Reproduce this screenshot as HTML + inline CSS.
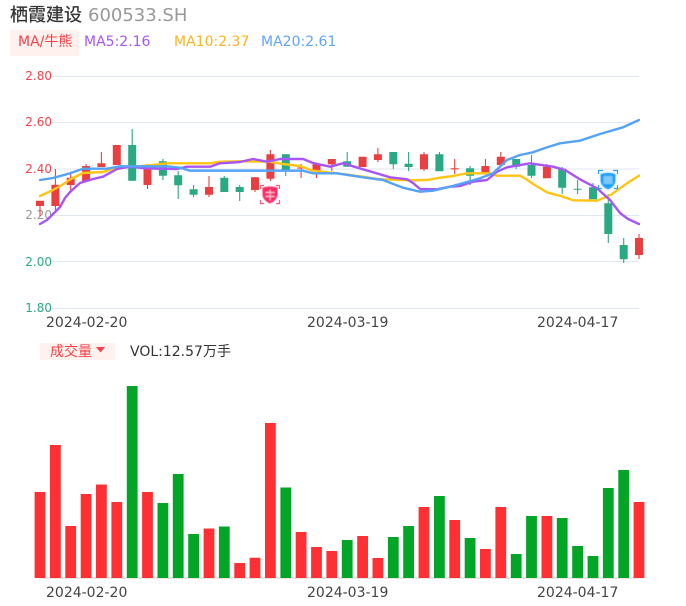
<!DOCTYPE html>
<html><head><meta charset="utf-8"><style>
html,body{margin:0;padding:0;background:#fff;width:686px;height:606px;overflow:hidden}
svg{display:block}
text{font-family:"DejaVu Sans","Noto Sans CJK SC","WenQuanYi Zen Hei",sans-serif}
.y{font-size:12px;text-anchor:end}
.d{font-size:14px;fill:#444}
</style></head><body>
<svg width="686" height="606" viewBox="0 0 686 606" xmlns="http://www.w3.org/2000/svg">
<defs><filter id="g" x="-30%" y="-30%" width="160%" height="160%"><feGaussianBlur stdDeviation=".5"/></filter></defs>
<text x="10" y="21" font-size="18" fill="#333" stroke="#333" stroke-width=".25">栖霞建设</text>
<text x="88" y="21" font-size="18" fill="#999">600533.SH</text>
<rect x="10" y="30" width="69" height="26" fill="#fff2ee"/>
<text x="18" y="46" font-size="14" fill="#f9404a">MA/牛熊</text>
<text x="84" y="46" font-size="14" fill="#a855f7">MA5:2.16</text>
<text x="174" y="46" font-size="14" fill="#fbb320">MA10:2.37</text>
<text x="261" y="46" font-size="14" fill="#60a5fa">MA20:2.61</text>

<path d="M52 76.5H639M52 122.5H639M52 169H639M52 215.5H639M52 261.5H639M52 308.5H639" stroke="#e1e6f3" stroke-width="1" fill="none"/>
<text class="y" x="52" y="80" fill="#f9404a">2.80</text>
<text class="y" x="52" y="126" fill="#f9404a">2.60</text>
<text class="y" x="52" y="173" fill="#f9404a">2.40</text>
<text class="y" x="52" y="219" fill="#999">2.20</text>
<text class="y" x="52" y="266" fill="#2aa984">2.00</text>
<text class="y" x="52" y="312" fill="#2aa984">1.80</text>
<text class="d" x="46" y="327">2024-02-20</text>
<text class="d" x="307" y="327">2024-03-19</text>
<text class="d" x="537" y="327">2024-04-17</text>

<g fill="none" stroke-width="1.1" stroke="#ea3f41">
<path d="M40 206V216M55.4 169V210M70.7 174V193M86.1 164V182M101.4 152V167M147.5 164V189M209 176V197M255 177V192M270.4 150V181M301.1 164V178M316.5 164V178M331.8 159V171M377.9 148V162M424 152V171M454.7 159V174M485.4 159V173M500.8 152V165M546.9 164V178M639 234V259"/>
</g>
<g fill="none" stroke-width="1.1" stroke="#2aa984">
<path d="M132.2 129V181M162.9 159V180M178.2 171V199M193.6 185V197M224.3 176V192M239.7 185V201M285.8 154V176M347.2 152V167M393.3 152V169M408.6 152V171M439.4 152V171M470.1 166V185M516.2 159V169M531.5 155V178M562.2 167V194M577.6 180V194M593 183V199M608.3 194V243M623.7 238V263"/>
</g>
<g fill="none" stroke-width="8" stroke="#ea3f41">
<path d="M40 200.7V206M55.4 184.7V206M70.7 177.7V185M86.1 166V181.3M101.4 163.3V167M116.8 145V165M147.5 167V185M209 187V194.7M255 177.3V190M270.4 154.3V178.7M316.5 164.3V171.7M331.8 159V164.3M362.6 156.7V167M377.9 154.3V160M424 154.3V169.3M485.4 166V173.3M500.8 156.7V165M546.9 166.7V178.3M639 238V255M301.1 167.5V168.5M454.7 168.2V169.4"/>
</g>
<g fill="none" stroke-width="8" stroke="#2aa984">
<path d="M132.2 145V180.7M162.9 161.3V175.7M178.2 175.3V185.3M193.6 189.3V194.7M224.3 177.7V192M239.7 187V192M285.8 154.3V170.7M347.2 161.3V166.7M393.3 152V164.3M408.6 163.7V167M439.4 154.3V171.3M470.1 168.3V175.7M516.2 159V166.7M531.5 165V175.7M562.2 168.7V187.7M577.6 188.8V189.8M593 187.3V199.3M608.3 203.3V234M623.7 245V259.3"/>
</g>

<g fill="none" stroke-width="2.4" stroke-linejoin="round" stroke-linecap="round">
<polyline stroke="#ffc414" points="40,196 53,190 62,185 70,179.5 83,173 103,172 120,166.7 133,166.7 153,165 167,163.3 210,163.3 220,161.7 240,161.3 270,161.7 283,164 300,166 313,170.7 337,173.3 363,176.7 380,179.3 410,180.3 427,180 440,177.7 453,176 467,173.3 490,173.3 497,175.7 520,175.700 526,179 533,184 547,192.3 563,196.700 573,200.300 597,200.700 610,195.300 627,183.300 639,175.700"/>
<polyline stroke="#a855f7" points="40,224 47,220 53,214 60,207 65,198 70,192 80,183 93,179 103,176.700 117,169 130,166.700 143,168 157,168.700 177,169 187,166.700 210,166.700 220,163.300 240,162 253,159 267,161.700 280,159 303,159 313,163 330,166.700 343,163.300 363,169.300 390,177.300 407,179.300 413,183 420,189 437,189.300 450,186.700 460,186 473,181.700 487,180 497,171.700 507,167.300 530,163.300 553,166.700 565,170 580,179.300 597,188.300 610,200 620,213 628,219 639,224"/>
<polyline stroke="#54a3f5" points="40,180 53,178 70,173.300 83,168.700 107,168.700 120,166.300 167,166.300 180,167.700 190,170.700 303,170.700 313,173.300 337,173.300 363,177.300 383,180 403,187.700 420,191.700 433,190.700 450,186.700 460,184 480,178.300 493,173.300 507,160 520,155 533,152.300 545,148 560,143.300 580,140.700 600,134 623,127.300 639,120"/>
</g>

<g>
<g filter="url(#g)">
<path d="M262.5 187.5Q270 185.500 277.500 187.500V195Q277 200.500 270 203.500Q263 200.500 262.500 195Z" fill="#fc2a66"/>
<path d="M265.500 192.500H274.500M265.500 196.500H274.500M270 189.500V200.500" stroke="#ffc4d4" stroke-width="1.300" fill="none"/>
</g>
<path d="M260.500 189V185.500H264M276 185.500H279.500V189M260.500 200V203.500H264M276 203.500H279.500V200" stroke="#fb5a82" stroke-width="1.200" fill="none"/>
<g filter="url(#g)">
<path d="M600.500 174Q608 171.500 615.500 174V181Q615 186.500 608 189.500Q601 186.500 600.500 181Z" fill="#1aa0fb"/>
<rect x="603.500" y="176" width="9" height="8" fill="#7cc8fb"/>
</g>
<path d="M598.500 174V170.500H603M613 170.500H617.500V174M598.500 185V188.500H602M614 188.500H617.500V185" stroke="#2aa6f7" stroke-width="1.200" fill="none"/>
</g>

<rect x="40" y="343" width="75" height="17" fill="#fff2ee"/>
<text x="50" y="356" font-size="14" fill="#f9404a">成交量</text>
<path d="M96 347H105L100.500 352.500Z" fill="#f9404a"/>
<text x="130" y="356" font-size="14" fill="#333">VOL:12.57万手</text>

<path d="M40 578H639" stroke="#ddd" stroke-width="1.500" fill="none"/>
<g fill="none" stroke-width="10.800" stroke="#ff3034">
<path d="M40 492V578M55.400 445V578M70.700 526V578M86.100 494V578M101.400 484.500V578M116.800 502V578M147.500 492V578M209 528.500V578M239.700 563V578M255 557.700V578M270.400 423V578M301.100 532V578M316.500 547V578M331.800 551V578M362.600 536V578M377.900 558V578M424 507V578M454.700 520V578M485.400 549V578M500.800 507V578M546.900 516V578M639 502V578"/>
</g>
<g fill="none" stroke-width="10.800" stroke="#02a525">
<path d="M132.200 386V578M162.900 503V578M178.200 474V578M193.600 534V578M224.300 526.500V578M285.800 487.500V578M347.200 540V578M393.300 537V578M408.600 526V578M439.400 496V578M470.100 538V578M516.200 554V578M531.500 516V578M562.200 518V578M577.600 546V578M593 556V578M608.300 488V578M623.700 470V578"/>
</g>
<text class="d" x="46" y="597">2024-02-20</text>
<text class="d" x="307" y="597">2024-03-19</text>
<text class="d" x="537" y="597">2024-04-17</text>
</svg>
</body></html>
